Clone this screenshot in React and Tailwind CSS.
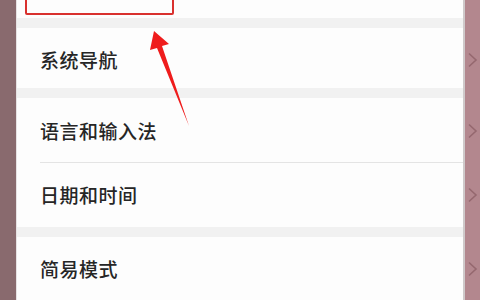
const font = { fontFamily: '"Noto Sans CJK SC", "Noto Sans", sans-serif' };

function Chevron() {
  return (
    <svg width="12" height="16" viewBox="0 0 12 16" className="ml-[2px]">
      <path d="M2 1.5 L9 8 L2 14.5" fill="none" stroke="#95686f" strokeWidth="1.6" />
    </svg>
  );
}

function Side({ chevron, pt = '' }) {
  return (
    <>
      <div className="w-[2px] bg-[#cfc9ca]" />
      <div className={`w-[15px] bg-[#b3878e] flex items-center ${pt}`}>
        {chevron && <Chevron />}
      </div>
    </>
  );
}

function Band() {
  return (
    <div className="flex h-[10px] shrink-0">
      <div className="flex-1 bg-[#f1f1f1]" />
      <Side />
    </div>
  );
}

function Row({ label, h, pt = '' }) {
  return (
    <div className={`flex shrink-0 ${h}`}>
      <div className={`flex-1 bg-[#fdfdfd] flex items-center pl-[23px] ${pt}`}>
        <span className="text-[19px] font-medium text-[#262626] tracking-[0.5px]" style={font}>
          {label}
        </span>
      </div>
      <Side chevron pt={pt} />
    </div>
  );
}

export default function App() {
  return (
    <div className="relative w-[480px] h-[300px] overflow-hidden flex bg-white">
      <div className="w-[16px] bg-[#896a6e]" />
      <div className="w-[1px] bg-[#e6e2e3]" />
      <div className="flex-1 flex flex-col">
        <div className="flex h-[18px] shrink-0">
          <div className="flex-1 bg-[#fdfdfd] overflow-hidden">
            <div className="ml-[8px] -mt-[18px] w-[149px] h-[33px] border-2 border-[#d9312e] rounded-[2px]" />
          </div>
          <Side />
        </div>
        <Band />
        <Row label="系统导航" h="h-[60px]" pt="pt-[4px]" />
        <Band />
        <Row label="语言和输入法" h="h-[64px]" pt="pt-[2px]" />
        <div className="flex h-[1px] shrink-0">
          <div className="w-[23px] bg-[#fdfdfd]" />
          <div className="flex-1 bg-[#e4e4e4]" />
          <Side />
        </div>
        <Row label="日期和时间" h="h-[64px]" />
        <Band />
        <Row label="简易模式" h="h-[64px]" />
        <div className="flex flex-1">
          <div className="flex-1 bg-[#fdfdfd]" />
          <Side />
        </div>
      </div>
      <svg className="absolute left-0 top-0" width="480" height="300" viewBox="0 0 480 300">
        <path d="M189 126 L162 46 L169 44 L154 31 L150 50 L157 48 Z" fill="#ef1c1c" />
      </svg>
    </div>
  );
}
